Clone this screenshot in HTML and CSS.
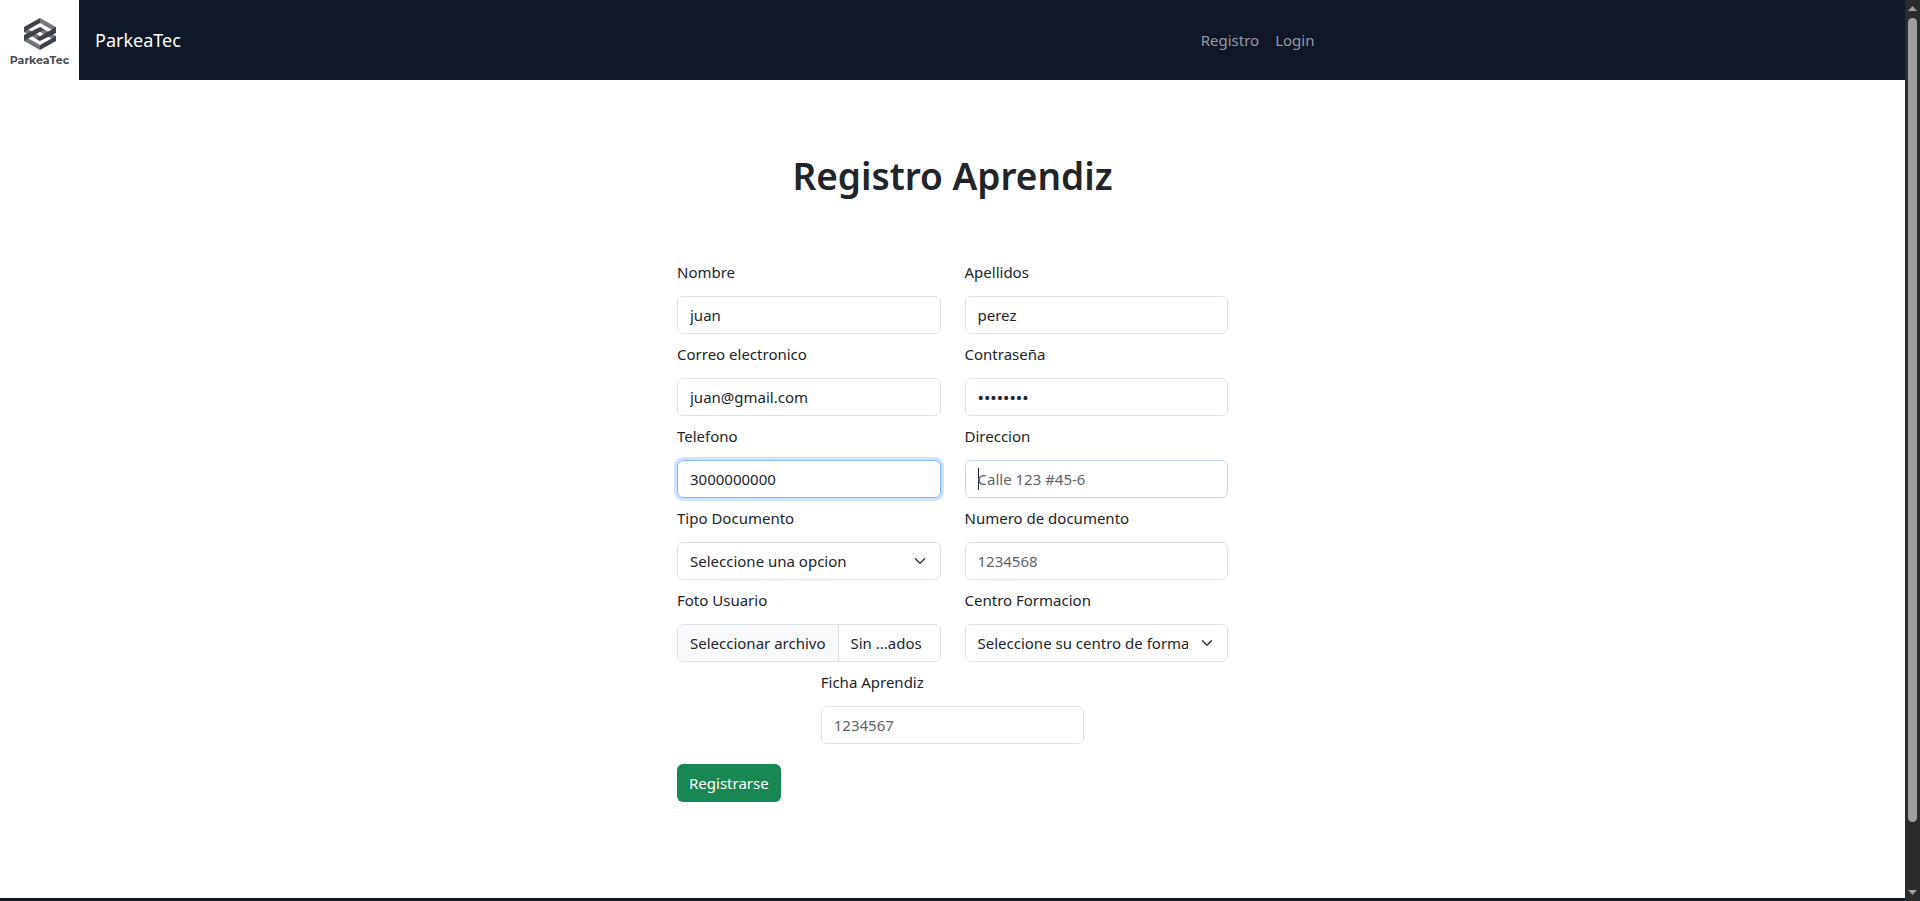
FILE: index.html
```html
<!DOCTYPE html>
<html lang="es">
<head>
<meta charset="utf-8">
<meta name="viewport" content="width=device-width, initial-scale=1">
<title>ParkeaTec - Registro Aprendiz</title>
<link rel="stylesheet" href="styles.css">
</head>
<body>
<div class="page">
  <header class="navbar">
    <a class="brand" href="#">
      <span class="brand-logo">
        <svg class="logo-mark" viewBox="0 0 32 32" aria-hidden="true">
          <path fill="#73767d" d="M16 0 32 9V14L16 5Z"/>
          <path fill="#73767d" d="M16 9 32 18V23L16 14Z"/>
          <path fill="#73767d" d="M0 9 16 18V23L0 14Z"/>
          <path fill="#73767d" d="M0 18 16 27V32L0 23Z"/>
          <path fill="#3f424b" d="M0 9 16 0V5L0 14Z"/>
          <path fill="#3f424b" d="M0 17 16 9 20 11.500 0 23Z"/>
          <path fill="#3f424b" d="M32 15 16 23 12 20.500 32 9Z"/>
          <path fill="#3f424b" d="M32 18 16 27V32L32 23Z"/>
          <path fill="#fff" d="M16 14 18.500 16 16 18 13.500 16Z"/>
        </svg>
        <span class="logo-text">ParkeaTec</span>
      </span>
      <span class="brand-name">ParkeaTec</span>
    </a>
    <nav class="nav-links">
      <a href="#">Registro</a>
      <a href="#">Login</a>
    </nav>
  </header>
  <main class="content">
    <h1 class="title">Registro Aprendiz</h1>
    <form class="form">
      <div class="field">
        <label for="nombre">Nombre</label>
        <input class="control" id="nombre" type="text" value="juan">
      </div>
      <div class="field">
        <label for="apellidos">Apellidos</label>
        <input class="control" id="apellidos" type="text" value="perez">
      </div>
      <div class="field">
        <label for="correo">Correo electronico</label>
        <input class="control" id="correo" type="email" value="juan@gmail.com">
      </div>
      <div class="field">
        <label for="clave">Contraseña</label>
        <input class="control password" id="clave" type="password" value="12345678">
      </div>
      <div class="field">
        <label for="telefono">Telefono</label>
        <input class="control is-active" id="telefono" type="tel" value="3000000000">
      </div>
      <div class="field">
        <label for="direccion">Direccion</label>
        <input class="control has-caret" id="direccion" type="text" placeholder="Calle 123 #45-6">
      </div>
      <div class="field">
        <label for="tipo">Tipo Documento</label>
        <select class="control select" id="tipo"><option>Seleccione una opcion</option></select>
      </div>
      <div class="field">
        <label for="numero">Numero de documento</label>
        <input class="control" id="numero" type="text" placeholder="1234568">
      </div>
      <div class="field">
        <label for="foto">Foto Usuario</label>
        <label class="control file" for="foto">
          <span class="file-button">Seleccionar archivo</span>
          <span class="file-name">Sin ...ados</span>
          <input class="file-input" id="foto" type="file">
        </label>
      </div>
      <div class="field">
        <label for="centro">Centro Formacion</label>
        <select class="control select" id="centro"><option>Seleccione su centro de formacion</option></select>
      </div>
      <div class="field field-center">
        <label for="ficha">Ficha Aprendiz</label>
        <input class="control" id="ficha" type="text" placeholder="1234567">
      </div>
      <button class="submit" type="submit">Registrarse</button>
    </form>
  </main>
  <footer class="footer"></footer>
</div>
<div class="scrollbar" aria-hidden="true">
  <svg class="arrow" viewBox="0 0 9 5"><path d="M0 5 4.500 0 9 5Z"/></svg>
  <div class="track"><div class="thumb"></div></div>
  <svg class="arrow" viewBox="0 0 9 5"><path d="M0 0 4.500 5 9 0Z"/></svg>
</div>
</body>
</html>
```
FILE: styles.css
```css
* {
  box-sizing: border-box;
}

body {
  margin: 0;
  display: flex;
  min-height: 100vh;
  background: #fff;
  color: #212529;
  font: 15px/24px "Segoe UI", "Noto Sans", sans-serif;
}

.page {
  flex: 1;
  display: flex;
  flex-direction: column;
}

.navbar {
  display: flex;
  align-items: center;
  justify-content: space-between;
  background: #101726;
}

.brand {
  display: flex;
  align-items: center;
  gap: 16px;
  color: #fff;
  text-decoration: none;
}

.brand-logo {
  display: flex;
  flex-direction: column;
  align-items: center;
  gap: 4px;
  width: 79px;
  height: 80px;
  padding-top: 18px;
  background: #fff;
  color: #4a4d55;
}

.logo-mark {
  width: 32px;
  height: 32px;
}

.logo-text {
  font: 700 11px/12px "Montserrat", "DejaVu Sans", sans-serif;
}

.brand-name {
  font-size: 18px;
}

.nav-links {
  display: flex;
  gap: 16px;
  margin-right: 31%;
}

.nav-links a {
  color: #949aa3;
  text-decoration: none;
}

.content {
  flex: 1;
  display: flex;
  flex-direction: column;
  align-items: center;
  gap: 60px;
  padding: 72px 16px 96px;
}

.title {
  margin: 0;
  font-size: 37px;
  font-weight: 600;
  line-height: 48px;
}

.form {
  display: grid;
  grid-template-columns: 1fr 1fr;
  gap: 8px 24px;
  width: 100%;
  max-width: 551px;
}

.field {
  display: flex;
  flex-direction: column;
  gap: 12px;
  min-width: 0;
}

.field-center {
  grid-column: 1 / -1;
  justify-self: center;
  width: calc(50% - 12px);
}

.control {
  width: 100%;
  height: 38px;
  padding: 6px 12px;
  border: 1px solid #dee2e6;
  border-radius: 6px;
  background-color: #fff;
  color: #212529;
  font: inherit;
  outline: 0;
}

.control::placeholder {
  color: #5f6469;
  opacity: 1;
}

.password {
  font-size: 17px;
}

.is-active {
  border-color: #86b7fe;
  box-shadow: 0 0 0 3px #cfe2ff;
}

.has-caret {
  border-color: #c2d6f2;
  background-image: linear-gradient(#212529, #212529);
  background-repeat: no-repeat;
  background-position: 12px center;
  background-size: 1px 22px;
}

.select {
  appearance: none;
  padding-right: 39px;
  background-image: url("data:image/svg+xml,%3Csvg xmlns='http://www.w3.org/2000/svg' viewBox='0 0 16 16'%3E%3Cpath fill='none' stroke='%23343a40' stroke-linecap='round' stroke-linejoin='round' stroke-width='2' d='m2 5 6 6 6-6'/%3E%3C/svg%3E");
  background-repeat: no-repeat;
  background-position: right 12px center;
  background-size: 16px 12px;
}

.file {
  position: relative;
  display: flex;
  padding: 0;
  overflow: hidden;
}

.file-button,
.file-name {
  padding: 6px 12px;
  white-space: nowrap;
}

.file-button {
  border-right: 1px solid #dee2e6;
  background: #f8f9fa;
}

.file-input {
  position: absolute;
  inset: 0;
  width: 100%;
  opacity: 0;
}

.submit {
  justify-self: start;
  margin-top: 12px;
  padding: 7px 12px;
  border: 0;
  border-radius: 6px;
  background: #198754;
  color: #fff;
  font: inherit;
}

.footer {
  height: 3px;
  background: #101726;
}

.scrollbar {
  display: flex;
  flex-direction: column;
  align-items: center;
  gap: 7px;
  width: 15px;
  padding: 6px 0;
  background: #2c2c2c;
}

.arrow {
  width: 9px;
  height: 5px;
  fill: #9f9f9f;
}

.track {
  flex: 1;
  width: 9px;
}

.thumb {
  height: 93%;
  border-radius: 5px;
  background: #9f9f9f;
}
```
